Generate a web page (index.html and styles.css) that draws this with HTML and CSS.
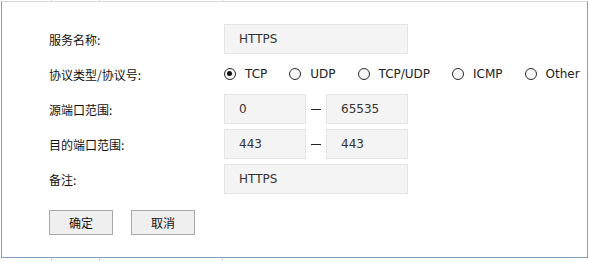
FILE: index.html
```html
<!DOCTYPE html>
<html lang="zh-CN">
<head>
  <meta charset="UTF-8">
  <title>服务配置</title>
  <link rel="stylesheet" href="styles.css">
</head>
<body>
  <div class="frame">
    <div class="edge edge-top">
      <span class="cell c1"></span><span class="cell c2"></span><span class="cell c3"></span><span class="cell c4"></span>
    </div>

    <div class="panel">
      <div class="row">
        <label class="lbl">服务名称:</label>
        <input class="field wide" type="text" value="HTTPS">
      </div>

      <div class="row">
        <label class="lbl">协议类型/协议号:</label>
        <div class="radios">
          <span class="radio checked"><i></i>TCP</span>
          <span class="radio"><i></i>UDP</span>
          <span class="radio"><i></i>TCP/UDP</span>
          <span class="radio"><i></i>ICMP</span>
          <span class="radio"><i></i>Other</span>
        </div>
      </div>

      <div class="row">
        <label class="lbl">源端口范围:</label>
        <input class="field short" type="text" value="0">
        <span class="dash"></span>
        <input class="field short" type="text" value="65535">
      </div>

      <div class="row">
        <label class="lbl">目的端口范围:</label>
        <input class="field short" type="text" value="443">
        <span class="dash"></span>
        <input class="field short" type="text" value="443">
      </div>

      <div class="row">
        <label class="lbl">备注:</label>
        <input class="field wide" type="text" value="HTTPS">
      </div>

      <div class="buttons">
        <button class="btn">确定</button>
        <button class="btn">取消</button>
      </div>
    </div>

    <div class="edge edge-bottom">
      <span class="cell c1"></span><span class="cell c2"></span><span class="cell c3"></span><span class="cell c4"></span>
    </div>
  </div>
</body>
</html>
```

FILE: styles.css
```css
body {
  margin: 0;
  padding: 0;
  background: #fff;
  font-family: "DejaVu Sans", "Noto Sans CJK SC", sans-serif;
  font-size: 12px;
  color: #222;
}

.frame {
  margin-left: 1px;
  width: 587px;
}

/* bits of the table rows above and below */
.edge {
  display: flex;
  height: 1px;
}

.edge .cell {
  height: 1px;
  border-right: 1px solid #d6d6d6;
}

.edge-bottom {
  height: 3px;
}

.edge-bottom .cell {
  height: 3px;
  border-right-color: #ddd6d8;
}

.c1 { width: 50px; }
.c2 { width: 47px; }
.c3 { width: 122px; }
.c4 { flex: 1; border-right: none !important; }

.panel {
  border-top: 1px solid #d9d9d9;
  border-left: 1px solid #8a9db0;
  border-right: 1px solid #8a9db0;
  border-bottom: 1px solid #809db9;
  padding: 22px 0 0 47px;
  height: 257px;
  box-sizing: border-box;
}

.row {
  display: flex;
  align-items: center;
  height: 30px;
  margin-bottom: 5px;
}

.lbl {
  width: 175px;
  font-family: "Noto Sans CJK SC", sans-serif;
  font-size: 12px;
  color: #111;
}

.field {
  height: 30px;
  box-sizing: border-box;
  border: 1px solid #e4e4e4;
  background: #f4f4f4;
  padding: 0 0 0 14px;
  font-family: "DejaVu Sans", sans-serif;
  font-size: 12px;
  color: #333;
  outline: none;
}

.wide { width: 184px; }
.short { width: 82px; }

.dash {
  width: 10px;
  height: 1px;
  background: #222;
  margin: 0 5px;
}

.radios {
  display: flex;
  align-items: center;
  gap: 22px;
}

.radio {
  display: flex;
  align-items: center;
  color: #222;
}

.radio i {
  width: 12px;
  height: 12px;
  box-sizing: border-box;
  border: 1.5px solid #2a2a2a;
  border-radius: 50%;
  background: #f7f7f7;
  margin-right: 9px;
  position: relative;
}

.radio.checked i::after {
  content: '';
  position: absolute;
  left: 2px;
  top: 2px;
  width: 5px;
  height: 5px;
  border-radius: 50%;
  background: #111;
}

.buttons {
  display: flex;
  gap: 18px;
  margin-top: 16px;
}

.btn {
  width: 64px;
  height: 25px;
  border: 1px solid #a8a8a8;
  background: #efefef;
  font-family: "Noto Sans CJK SC", sans-serif;
  font-size: 12px;
  color: #111;
  padding: 0;
}
```
